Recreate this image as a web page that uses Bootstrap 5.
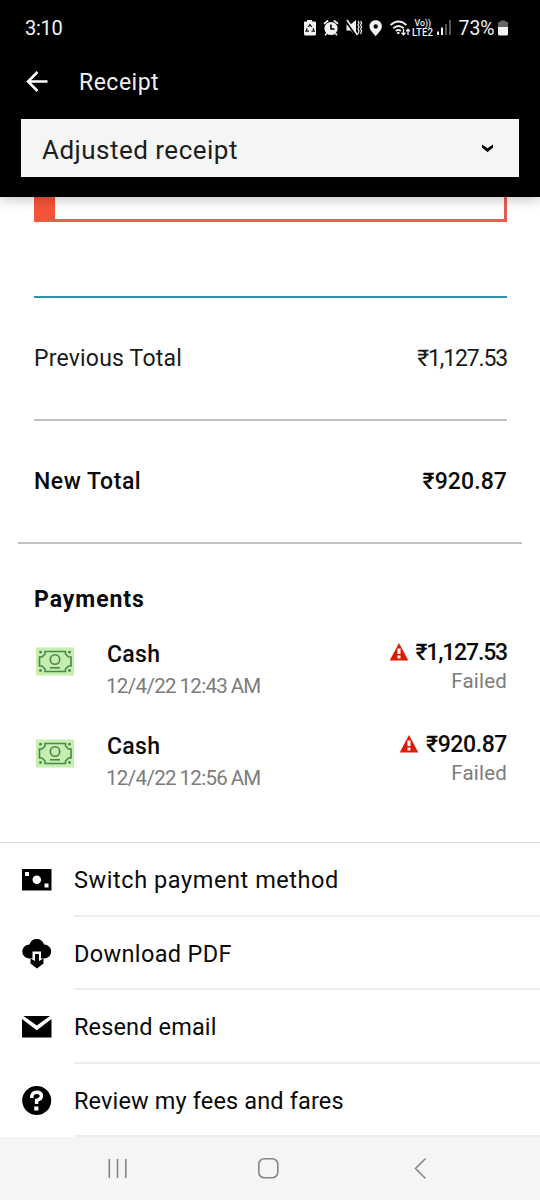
<!DOCTYPE html>
<html lang="en">
<head>
<meta charset="utf-8">
<meta name="viewport" content="width=device-width, initial-scale=1">
<title>Receipt</title>
<link href="https://cdn.jsdelivr.net/npm/bootstrap@5.3.0/dist/css/bootstrap.min.css" rel="stylesheet">
<style>
  body { font-family: Roboto, "Noto Sans", sans-serif; color: #0a0a0a; font-size: 23px; line-height: 28px; }
  svg { display: block; flex: none; }
  .screen { width: 540px; height: 1200px; }
  .app-header { height: 197px; box-shadow: 0 2px 12px rgba(0,0,0,.25); z-index: 2; }
  .status-bar { height: 56px; padding: 0 31px 0 25px; font-size: 20px; }
  .clock { letter-spacing: -.3px; color: #f2f2f2; }
  .title-bar { height: 52px; padding-left: 24px; }
  .title-bar svg { margin-top: -1px; }
  .title-text { margin-left: 30px; padding-top: 1px; letter-spacing: .5px; color: #f0f0f0; }
  .receipt-select { margin: 11px 21px 0; height: 58px; padding: 4px 24px 0 21px; background: #f5f5f5; font-size: 26px; color: #1c1c1c; letter-spacing: .48px; }
  .receipt-body { height: 645px; }
  .notice { margin: 0 33px 0 34px; height: 25px; border: solid #e5604e; border-width: 0 3px 3px 21px; border-left-color: #f65439; }
  .total-row { margin: 0 33px 0 34px; }
  .prev { margin-top: 74px; height: 125px; border-top: 2px solid #3391ae; border-bottom: 2px solid #c0c0c0; color: #1a1a1a; letter-spacing: .2px; }
  .new-total { height: 121px; font-weight: 500; letter-spacing: .55px; }
  .section-rule { margin: 0 18px; height: 2px; background: #c0c0c0; }
  .pay-title { font-size: 23px; letter-spacing: .95px; margin: 42px 0 -2px 34px; line-height: 28px; }
  .pay-row { height: 92px; padding: 0 33px 0 35px; }
  .pay-info { margin-left: 32px; }
  .pay-name { font-weight: 500; padding-top: 29px; letter-spacing: .3px; }
  .pay-sub { font-size: 20.5px; color: #7c7c7c; }
  .pay-date { margin-top: 3px; letter-spacing: -.65px; word-spacing: -1px; margin-left: -1px; }
  .pay-side .pay-total { padding-top: 27px; height: 55px; }
  .pay-side .pay-sub { letter-spacing: .2px; }
  .pay-amt { font-weight: 500; margin-left: 7px; }
  .amt { letter-spacing: -1.15px; }
  .amt-wide { letter-spacing: .1px; }
  .amt-mid { letter-spacing: -.4px; }
  .menu { border-top: 1px solid #d9d9d9; height: 295px; }
  .menu-row { height: 73.5px; padding-left: 22px; font-size: 23.5px; letter-spacing: .14px; }
  .menu-label { margin-left: 22px; padding-top: 3px; border-bottom: 2px solid #ededed; }
  .track-1 { letter-spacing: .57px; }
  .track-2 { letter-spacing: .35px; }
  .sys-nav { height: 63px; background: #f5f5f5; }
</style>
</head>
<body>
<div class="screen d-flex flex-column bg-white overflow-hidden mx-auto">
  <header class="app-header bg-black text-white position-relative flex-shrink-0">
    <div class="status-bar d-flex align-items-center justify-content-between">
      <span class="clock">3:10</span>
      <svg width="206" height="30" viewBox="303 13 206 30" fill="#f2f2f2">
        <path d="M307 20h5v1.500h3q1 0 1 1V34q0 1.500-1.500 1.500h-9q-1.500 0-1.500-1.500V22.500q0-1 1-1h2z"/>
        <path d="M308.300 27l1.700-2.400 1.700 2.400M313 28.300l1.200 2.900h-2.700M309 31.200h-3l1.200-2.900" fill="none" stroke="#111" stroke-width="1.200"/>
        <circle cx="331" cy="28.500" r="6.600"/>
        <path d="M324 23.700l4.200-3.200M338 23.700l-4.200-3.200M326.500 33.500l-1.400 1.700M335.500 33.500l1.400 1.700" stroke="#f2f2f2" stroke-width="1.700"/>
        <path d="M331 24.500v4.500h3.500" fill="none" stroke="#000" stroke-width="1.600"/>
        <path d="M346.500 24.500h4l5.500-4.500v15.500l-5.500-5h-4z"/>
        <path d="M346 21.500l10.500 14.500" stroke="#000" stroke-width="2"/><path d="M347 20l10.500 15" stroke="#f2f2f2" stroke-width="1.600"/>
        <path d="M358 21l1 2-1 2 1 2-1 2 1 2-1 3M360.600 21l1 2-1 2 1 2-1 2 1 2-1 3" fill="none" stroke="#f2f2f2" stroke-width="1.200"/>
        <path fill-rule="evenodd" d="M375.700 20.200c-3.700 0-6.200 2.700-6.200 6.100 0 3.700 3.400 6.600 6.200 10 2.800-3.400 6.200-6.300 6.200-10 0-3.400-2.500-6.100-6.200-6.100zm0 4a2.200 2.200 0 110 4.400 2.200 2.200 0 010-4.400z"/>
        <path d="M390.500 25.200q8-7.500 16 0M393.300 28.300q5.200-4.500 10.500 0M395.800 31q2.700-2.300 5 0" fill="none" stroke="#f2f2f2" stroke-width="1.800"/>
        <circle cx="398.300" cy="33" r="1.300"/>
        <path d="M403.500 29v5.500M401.600 32.800l1.900 2 1.900-2M408 35v-5.500M406.200 31.200l1.800-2 1.800 2" fill="none" stroke="#f2f2f2" stroke-width="1.300"/>
        <text x="414.500" y="26.300" font-size="9" font-weight="500" textLength="16.500" lengthAdjust="spacingAndGlyphs">Vo))</text>
        <text x="412" y="35.700" font-size="10" font-weight="500" textLength="21" lengthAdjust="spacingAndGlyphs">LTE2</text>
        <path d="M437 31.500h2V35h-2zM441 27.500h2V35h-2z"/><path d="M445 24h2v11h-2zM449 20h2v15h-2z" fill="#555"/>
        <text x="458.500" y="35" font-size="20" textLength="36" lengthAdjust="spacingAndGlyphs">73%</text>
        <path d="M500.500 20.500h5V22h2.500v6h-10v-6h2.500z" fill="#666"/><path d="M498 27h10v7q0 1.500-1.500 1.500h-7q-1.500 0-1.500-1.500z"/>
      </svg>
    </div>
    <div class="title-bar d-flex align-items-center">
      <svg width="25" height="25" viewBox="24 69.500 25 25" fill="none" stroke="#fff" stroke-width="2.500"><path d="M47.500 82H28M37.500 72.500L28 82l9.500 9.500"/></svg>
      <span class="title-text">Receipt</span>
    </div>
    <div class="receipt-select d-flex align-items-center justify-content-between">
      <span>Adjusted receipt</span>
      <svg width="15" height="12" viewBox="480 143.500 15 12"><path d="M482 144v2.900l5.500 4.900 5.500-4.900V144l-5.500 3.800z"/></svg>
    </div>
  </header>

  <main class="receipt-body flex-shrink-0">
    <div class="notice"></div>
    <div class="total-row prev d-flex align-items-center justify-content-between">
      <span>Previous Total</span><span class="amt">₹1,127.53</span>
    </div>
    <div class="total-row new-total d-flex align-items-center justify-content-between">
      <span>New Total</span><span class="amt-wide">₹920.87</span>
    </div>
    <div class="section-rule"></div>
    <h2 class="pay-title fw-bold">Payments</h2>
    <div>
      <div class="pay-row d-flex">
        <svg width="40" height="92" viewBox="35 612.500 40 92"><use href="#cash"/></svg>
        <div class="pay-info flex-grow-1"><div class="pay-name">Cash</div><div class="pay-sub pay-date">12/4/22 12:43 AM</div></div>
        <div class="pay-side text-end"><div class="pay-total d-flex align-items-center justify-content-end"><svg width="20" height="20" viewBox="-1 1 20 20"><use href="#warning"/></svg><span class="amt pay-amt">₹1,127.53</span></div><div class="pay-sub">Failed</div></div>
      </div>
      <div class="pay-row d-flex">
        <svg width="40" height="92" viewBox="35 612.500 40 92"><use href="#cash"/></svg>
        <div class="pay-info flex-grow-1"><div class="pay-name">Cash</div><div class="pay-sub pay-date">12/4/22 12:56 AM</div></div>
        <div class="pay-side text-end"><div class="pay-total d-flex align-items-center justify-content-end"><svg width="20" height="20" viewBox="0 1 20 20"><use href="#warning"/></svg><span class="amt-mid pay-amt">₹920.87</span></div><div class="pay-sub">Failed</div></div>
      </div>
    </div>
  </main>

  <nav class="menu flex-shrink-0">
    <div class="menu-row d-flex">
      <svg width="30" height="73" viewBox="22 843 30 73"><path fill-rule="evenodd" d="M22 869h29.500v21.500H22zM25 872v4h4v-4zM44.500 883.500v4h4v-4z"/><circle cx="36.800" cy="879.800" r="4.300" fill="#fff"/></svg>
      <span class="menu-label track-1 flex-grow-1 d-flex align-items-center">Switch payment method</span>
    </div>
    <div class="menu-row d-flex">
      <svg width="30" height="73" viewBox="22 917 30 73"><path d="M29 958.500a7 7 0 01.500-14 7.500 7.500 0 0114.500 0 7 7 0 01.500 14z"/><path d="M32.500 951.500h8.500v9.500h-8.500z" fill="#fff"/><path d="M35 954h4v7l4.500-2.500v5L37 968.500l-6.500-5v-5L35 961z"/></svg>
      <span class="menu-label track-2 flex-grow-1 d-flex align-items-center">Download PDF</span>
    </div>
    <div class="menu-row d-flex">
      <svg width="30" height="73" viewBox="22 990 30 73"><path d="M23.500 1016H50l-13.200 9.500zM22 1019l14.800 11.200L51.500 1019v18.500H22z"/></svg>
      <span class="menu-label flex-grow-1 d-flex align-items-center">Resend email</span>
    </div>
    <div class="menu-row d-flex">
      <svg width="30" height="73" viewBox="22 1064 30 73"><circle cx="36.700" cy="1100.500" r="14.500"/><path d="M31.800 1098q-.3-5.800 5-5.800 4.600 0 4.600 3.800 0 3-4.800 4.500v3.500" fill="none" stroke="#fff" stroke-width="3.500"/><path d="M34.200 1106.500h4.200v4h-4.200z" fill="#fff"/></svg>
      <span class="menu-label flex-grow-1 d-flex align-items-center">Review my fees and fares</span>
    </div>
  </nav>

  <footer class="sys-nav flex-shrink-0">
    <svg width="540" height="63" viewBox="0 1137 540 63" fill="none" stroke="#858585" stroke-width="1.600" stroke-linecap="round"><path d="M109.300 1159.500v18M117.500 1159.500v18M125.800 1159.500v18M425 1159l-9.500 9.500 9.500 9.500"/><rect x="258.800" y="1158.800" width="19" height="19" rx="5.500"/></svg>
  </footer>
</div>
<svg width="0" height="0" class="position-absolute">
  <defs>
    <g id="cash"><path d="M36 648h38v28H36z" fill="#c5eeaf"/><g fill="none" stroke="#48884a" stroke-width="1.600"><path d="M45 652h20.500v2.500l3 3h2.500v9h-2.500l-3 3v2.500H45v-2.500l-3-3h-2.500v-9H42l3-3z"/><circle cx="55" cy="660" r="4.700"/><path d="M50 668.300h10"/></g><g fill="#48884a"><circle cx="40.500" cy="652.700" r="1.400"/><circle cx="69.500" cy="652.700" r="1.400"/><circle cx="40.500" cy="671" r="1.400"/><circle cx="69.500" cy="671" r="1.400"/></g></g>
    <g id="warning"><path d="M10 1l9.300 17.500H.7z" fill="#e11900"/><path d="M8.500 6.500h3v5.500h-3zM8.500 13.500h3v3h-3z" fill="#fff"/></g>
  </defs>
</svg>
<script src="https://cdn.jsdelivr.net/npm/bootstrap@5.3.0/dist/js/bootstrap.bundle.min.js"></script>
</body>
</html>
